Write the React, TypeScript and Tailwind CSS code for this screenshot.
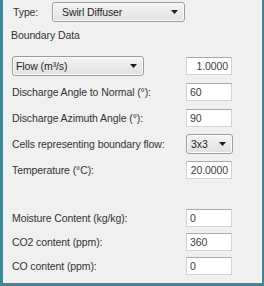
import type { FC } from 'react';

const font = { fontFamily: '"Liberation Sans", Arial, sans-serif' };

const Arrow: FC = () => (
  <svg width="7" height="4" viewBox="0 0 7 4" className="shrink-0">
    <path d="M0 0 H7 L3.5 4 Z" fill="#1a1a1a" />
  </svg>
);

interface ComboProps {
  label: string;
  className: string;
  textClass?: string;
}

const Combo: FC<ComboProps> = ({ label, className, textClass = 'pl-[7px]' }) => (
  <div
    className={`flex items-center justify-between rounded-[3px] border border-[#9d9d9d] bg-gradient-to-b from-[#f4f4f4] to-[#e1e1e1] pr-[6px] shadow-[inset_0_0_0_1px_#fbfbfb] ${className}`}
  >
    <span className={`${textClass} text-[#262626]`}>{label}</span>
    <Arrow />
  </div>
);

interface FieldProps {
  value: string;
  right?: boolean;
}

const Field: FC<FieldProps> = ({ value, right }) => (
  <div
    className={`flex h-[18px] w-[46px] items-center border border-[#d3d3d3] border-t-[#a9a9a9] bg-white px-[3px] text-[#3c3c3c] ${
      right ? 'justify-end' : 'justify-start'
    }`}
  >
    {value}
  </div>
);

interface RowProps {
  label: string;
  value: string;
  right?: boolean;
  h?: string;
}

const Row: FC<RowProps> = ({ label, value, right, h = 'h-[26px]' }) => (
  <div className={`flex items-center ${h}`}>
    <div className="w-[183px] pl-[9px] text-[#333]">{label}</div>
    <Field value={value} right={right} />
  </div>
);

const App: FC = () => {
  return (
    <div
      className="flex h-[286px] w-[264px] flex-col border-b-[3px] border-l-[3px] border-r-2 border-[#3f8796] bg-[#f0f0f0] text-[10.5px] leading-[14px] tracking-[-0.1px]"
      style={font}
    >
      {/* Type selector */}
      <div className="mt-[2px] flex h-[20px] items-center">
        <div className="w-[49px] pl-[10px] text-[#333]">Type:</div>
        <Combo label="Swirl Diffuser" className="h-[20px] w-[133px]" textClass="pl-[9px]" />
      </div>

      <div className="mt-[6px] pl-[8px] text-[#333]">Boundary Data</div>

      {/* Flow */}
      <div className="mt-[11px] flex h-[26px] items-center">
        <div className="w-[183px] pl-[9px]">
          <Combo label="Flow (m³/s)" className="h-[20px] w-[132px]" textClass="pl-[3px]" />
        </div>
        <Field value="1.0000" right />
      </div>

      <Row label="Discharge Angle to Normal (°):" value="60" />
      <Row label="Discharge Azimuth Angle (°):" value="90" />

      <div className="flex h-[26px] items-center">
        <div className="w-[183px] pl-[9px] text-[#333]">Cells representing boundary flow:</div>
        <Combo label="3x3" className="h-[20px] w-[47px]" textClass="pl-[4px]" />
      </div>

      <Row label="Temperature (°C):" value="20.0000" right />

      <div className="mt-[23px] flex flex-col">
        <Row label="Moisture Content (kg/kg):" value="0" h="h-[24px]" />
        <Row label="CO2 content (ppm):" value="360" h="h-[24px]" />
        <Row label="CO content (ppm):" value="0" h="h-[24px]" />
      </div>
    </div>
  );
};

export default App;
